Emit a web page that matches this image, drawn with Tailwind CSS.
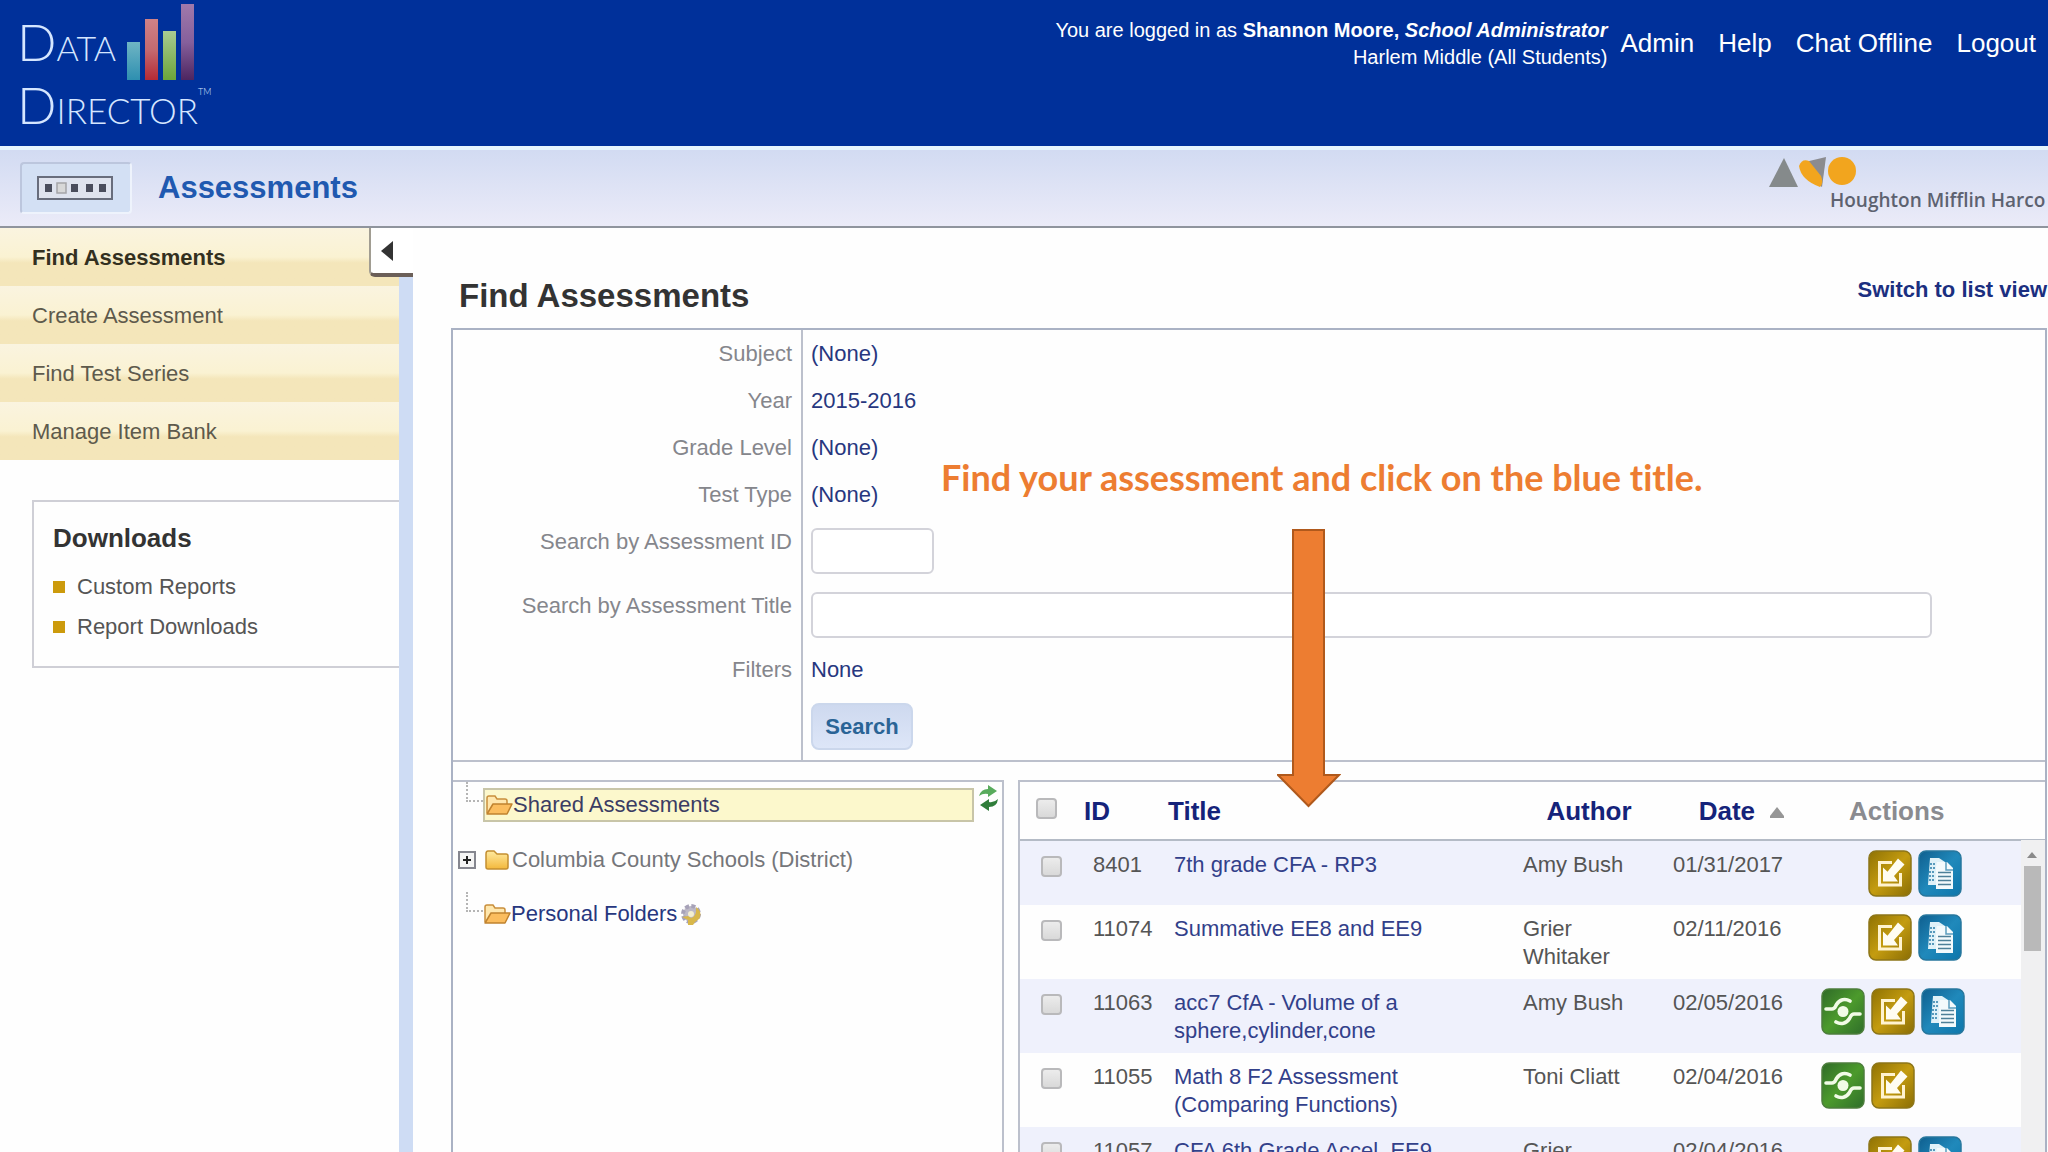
<!DOCTYPE html>
<html lang="en">
<head>
  <meta charset="UTF-8">
  <meta name="viewport" content="width=device-width, initial-scale=1.0">
  <title>DataDirector | Find Assessments</title>
  <script src="https://cdn.jsdelivr.net/npm/@tailwindcss/browser@4"></script>
</head>
<body class="h-screen flex flex-col overflow-hidden bg-[#fefefe] font-['Liberation_Sans',Arial,sans-serif] text-[22px] leading-7 text-[#555]">

  <!-- Shared icons -->
  <svg class="absolute size-0" aria-hidden="true">
    <defs>
      <linearGradient id="gold" x1="0" y1="0" x2="1" y2="1">
        <stop offset="0" stop-color="#8f7204"/><stop offset=".5" stop-color="#c49c10"/><stop offset="1" stop-color="#8a6d05"/>
      </linearGradient>
      <linearGradient id="blue" x1="0" y1="0" x2="1" y2="1">
        <stop offset="0" stop-color="#0f5f8f"/><stop offset=".5" stop-color="#2089bb"/><stop offset="1" stop-color="#0d76ab"/>
      </linearGradient>
      <linearGradient id="green" x1="0" y1="0" x2="1" y2="1">
        <stop offset="0" stop-color="#2f6b28"/><stop offset=".5" stop-color="#4c9a2c"/><stop offset="1" stop-color="#2f6e2a"/>
      </linearGradient>
      <linearGradient id="folder" x1="0" y1="0" x2="0" y2="1">
        <stop offset="0" stop-color="#ffeaa0"/><stop offset="1" stop-color="#f3b83c"/>
      </linearGradient>
      <symbol id="edit" viewBox="0 0 44 47">
        <rect x="1" y="1" width="42" height="45" rx="7" fill="url(#gold)" stroke="#8d7619" stroke-width="1.5"/>
        <path d="M24 12.500H11.500v22.500H32.500V23" fill="none" stroke="#fff3cf" stroke-width="3"/>
        <path d="M15 31.500V17.500l4.500 4.200L30 8.500l6.500 6L26 26l4 5.500z" fill="#fffdf2"/>
      </symbol>
      <symbol id="copy" viewBox="0 0 44 47">
        <rect x="1" y="1" width="42" height="45" rx="7" fill="url(#blue)" stroke="#27779d" stroke-width="1.500"/>
        <path d="M12 8h9l6 4v23H10z" fill="#dff1f8"/>
        <path d="M12 14h5M12 18h5M11 22h5M11 26h5M11 30h5" stroke="#2b7ea8" stroke-width="1.500" stroke-dasharray="2 1"/>
        <path d="M19 12h10l6 6v21H18V17z" fill="#f3fafc"/>
        <path d="M28 12v8h7" fill="none" stroke="#5b9dbd" stroke-width="1.500"/>
        <path d="M20 22.500h13M20 26.500h13M20 30.500h13M20 34.500h13" stroke="#4d8098" stroke-width="1.600"/>
      </symbol>
      <symbol id="share" viewBox="0 0 44 47">
        <rect x="1" y="1" width="42" height="45" rx="7" fill="url(#green)" stroke="#4d7e3c" stroke-width="1.500"/>
        <circle cx="22" cy="23.500" r="5.500" fill="#f1fbe6"/>
        <path d="M5 21h6c3 0 3-2 4.500-4.500C18.500 11.500 24 10 29 13M39 26h-6c-3 0-3 2-4.500 4.500C25.500 35.500 20 37 15 34" fill="none" stroke="#f1fbe6" stroke-width="3.600" stroke-linecap="round"/>
      </symbol>
      <symbol id="open" viewBox="0 0 28 22">
        <path d="M2 19V4q0-2 2-2h6l2 3h8q2 0 2 2v3" fill="#ffe7ad" stroke="#c98f3c" stroke-width="1.500"/>
        <path d="M2 20L8 10h19l-5 10z" fill="#fbbd5e" stroke="#c0832f" stroke-width="1.500" stroke-linejoin="round"/>
      </symbol>
    </defs>
  </svg>

  <!-- Header -->
  <header class="shrink-0 h-[146px] flex justify-between bg-[#00309a] text-white">
    <a href="#" aria-label="Data Director" class="pl-[17px] pt-1 flex flex-col font-['Lato',sans-serif] font-light text-[#d5e6ff]">
      <span class="flex items-end gap-[11px] h-[78px]">
        <span class="text-[34px] leading-[68px]"><span class="text-[52px]">D</span>ATA</span>
        <svg class="w-[67px] h-[78px]" viewBox="0 0 67 78">
          <defs>
            <linearGradient id="b1" x1="0" y1="0" x2="0" y2="1"><stop offset="0" stop-color="#6fb5c4"/><stop offset="1" stop-color="#2e8fb0"/></linearGradient>
            <linearGradient id="b2" x1="0" y1="0" x2="0" y2="1"><stop offset="0" stop-color="#cf8287"/><stop offset=".5" stop-color="#c46a70"/><stop offset="1" stop-color="#b52a35"/></linearGradient>
            <linearGradient id="b3" x1="0" y1="0" x2="0" y2="1"><stop offset="0" stop-color="#a9cb92"/><stop offset="1" stop-color="#6ba53a"/></linearGradient>
            <linearGradient id="b4" x1="0" y1="0" x2="0" y2="1"><stop offset="0" stop-color="#9f79ab"/><stop offset=".5" stop-color="#86609c"/><stop offset="1" stop-color="#4d2560"/></linearGradient>
          </defs>
          <rect x="0" y="38" width="13" height="38" fill="url(#b1)"/>
          <rect x="18" y="15" width="13" height="61" fill="url(#b2)"/>
          <rect x="36" y="27" width="13" height="49" fill="url(#b3)"/>
          <rect x="54" y="0" width="13" height="76" fill="url(#b4)"/>
        </svg>
      </span>
      <span class="flex items-start text-[35px] leading-[44px]"><span><span class="text-[52px]">D</span>IRECTOR</span><span class="text-[9px] leading-5">TM</span></span>
    </a>
    <div class="flex items-start pt-[17px] pr-3 gap-[13px]">
      <p class="text-right text-[20px] leading-[27px]">You are logged in as <b>Shannon Moore, <i>School Administrator</i></b><br>Harlem Middle (All Students)</p>
      <nav class="flex gap-6 pt-3 text-[26px] leading-7">
        <a href="#">Admin</a>
        <a href="#">Help</a>
        <a href="#">Chat Offline</a>
        <a href="#">Logout</a>
      </nav>
    </div>
  </header>

  <!-- Title strip -->
  <div class="shrink-0 h-[82px] flex justify-between border-t-4 border-t-[#e6f5fd] border-b-2 border-b-[#8f949d] bg-linear-to-b from-[#d2dbf2] to-[#ebebf8]">
    <div class="flex items-center pl-5 gap-[26px]">
      <button aria-label="Modules" class="w-[112px] h-[52px] flex items-center pl-[14px] border-2 border-t-[#bcc6dd] border-l-[#bcc6dd] border-r-[#eef3fc] border-b-[#eef3fc] bg-[#d3e0f4] rounded">
        <svg class="w-[78px] h-[26px]" viewBox="0 0 78 26">
          <rect x="2" y="2" width="74" height="22" fill="#dfe3ee" stroke="#686d7c" stroke-width="2"/>
          <path d="M9 9h7v8H9zM35 9h7v8h-7zM50 9h7v8h-7zM63 9h7v8h-7z" fill="#4a4d5c"/>
          <rect x="21" y="8" width="9" height="10" fill="#d8d8d8" stroke="#a5a5a8" stroke-width="1.500"/>
        </svg>
      </button>
      <h2 class="text-[31px] leading-9 font-bold text-[#2059b0]">Assessments</h2>
    </div>
    <div class="w-[279px] pt-[6px]">
      <svg class="w-[88px] h-[32px]" viewBox="0 0 88 32">
        <path d="M15 2L29 31H0z" fill="#858a8b"/>
        <path d="M36 6L57 1L53 31Q44 26 34 12z" fill="#8b8b8f"/>
        <path d="M30 10Q33 2 40 5L52 20Q55 27 51 31Q32 24 30 10z" fill="#f2a51e"/>
        <circle cx="73" cy="15" r="14" fill="#f2a51e"/>
      </svg>
      <p class="pl-[61px] text-[19px] leading-6 font-semibold whitespace-nowrap text-[#5d6270] font-['Open_Sans',sans-serif]">Houghton Mifflin Harco</p>
    </div>
  </div>

  <div class="flex-1 min-h-0 flex">
    <!-- Sidebar -->
    <aside class="relative shrink-0 w-[413px] border-r-[14px] border-[#cedcf4]">
      <nav class="flex flex-col text-[#5e5a4c]">
        <a href="#" class="h-[58px] pl-8 leading-[60px] font-bold text-[#33301f] bg-linear-to-b from-[#faf4e0] via-[#faf2d2] via-50% to-[#f4e6ba] to-60%">Find Assessments</a>
        <a href="#" class="h-[58px] pl-8 leading-[60px] bg-linear-to-b from-[#faf4e0] via-[#faf2d2] via-50% to-[#f4e6ba] to-60%">Create Assessment</a>
        <a href="#" class="h-[58px] pl-8 leading-[60px] bg-linear-to-b from-[#faf4e0] via-[#faf2d2] via-50% to-[#f4e6ba] to-60%">Find Test Series</a>
        <a href="#" class="h-[58px] pl-8 leading-[60px] bg-linear-to-b from-[#faf4e0] via-[#faf2d2] via-50% to-[#f4e6ba] to-60%">Manage Item Bank</a>
      </nav>
      <section class="mt-10 ml-8 h-[168px] pl-[19px] pt-5 border-2 border-r-0 border-[#cfcfd6]">
        <h3 class="text-[26px] leading-8 font-bold text-[#333]">Downloads</h3>
        <ul class="pt-[13px] leading-10">
          <li class="flex items-center gap-3"><span class="size-3 bg-[#cc9a0c]"></span><a href="#">Custom Reports</a></li>
          <li class="flex items-center gap-3"><span class="size-3 bg-[#cc9a0c]"></span><a href="#">Report Downloads</a></li>
        </ul>
      </section>
      <!-- Collapse tab, sits over the menu -->
      <button aria-label="Collapse menu" class="absolute top-0 -right-[14px] w-11 h-[49px] pl-[10px] bg-white border-l-2 border-l-[#a19d92] border-b-4 border-b-[#6b5f58] rounded-bl-md">
        <svg class="w-3 h-5" viewBox="0 0 12 20"><path d="M12 0v20L0 10z" fill="#333"/></svg>
      </button>
    </aside>

    <main class="flex-1 min-w-0 flex flex-col pl-[38px] pr-px">
      <div class="shrink-0 h-[100px] pl-2 pt-12 flex justify-between items-start">
        <h1 class="text-[33px] leading-10 font-bold text-[#333]">Find Assessments</h1>
        <a href="#" class="font-bold text-[#1b2f80]">Switch to list view</a>
      </div>

      <div class="relative flex-1 min-h-0 flex flex-col border-2 border-b-0 border-[#aab2c4]">
        <!-- Search form -->
        <form class="shrink-0 border-b-2 border-[#bcc0cc] grid grid-cols-[350px_1fr] leading-[47px] text-[#27377f]">
          <span class="h-[47px] pr-[9px] border-r-2 border-[#bcc0cc] text-right text-[#85868c]">Subject</span>
          <a href="#" class="pl-2">(None)</a>
          <span class="h-[47px] pr-[9px] border-r-2 border-[#bcc0cc] text-right text-[#85868c]">Year</span>
          <a href="#" class="pl-2">2015-2016</a>
          <span class="h-[47px] pr-[9px] border-r-2 border-[#bcc0cc] text-right text-[#85868c]">Grade Level</span>
          <a href="#" class="pl-2">(None)</a>
          <span class="h-[47px] pr-[9px] border-r-2 border-[#bcc0cc] text-right text-[#85868c]">Test Type</span>
          <a href="#" class="pl-2">(None)</a>
          <label for="assessmentId" class="h-16 pr-[9px] border-r-2 border-[#bcc0cc] text-right text-[#85868c]">Search by Assessment ID</label>
          <div class="flex pl-2 pt-[10px]"><input id="assessmentId" type="text" class="w-[123px] h-[46px] px-2 border-2 border-[#d3d3da] rounded-md bg-white"></div>
          <label for="assessmentTitle" class="h-16 pr-[9px] border-r-2 border-[#bcc0cc] text-right text-[#85868c]">Search by Assessment Title</label>
          <div class="flex pl-2 pr-[113px] pt-[10px]"><input id="assessmentTitle" type="text" class="w-full h-[46px] px-2 border-2 border-[#d3d3da] rounded-md bg-white"></div>
          <span class="h-[47px] pr-[9px] border-r-2 border-[#bcc0cc] text-right text-[#85868c]">Filters</span>
          <a href="#" class="pl-2">None</a>
          <span class="h-[67px] border-r-2 border-[#bcc0cc]"></span>
          <div class="flex pl-2 pt-[10px]"><button type="button" class="w-[102px] h-[47px] rounded-lg border-2 border-[#cbd7ec] bg-linear-to-b from-[#ced9ef] to-[#dde6f8] leading-7 font-bold text-[#2a6496]">Search</button></div>
        </form>

        <div class="flex-1 min-h-0 flex gap-[14px] pt-[18px]">
          <!-- Folder tree -->
          <div class="shrink-0 w-[551px] border-t-2 border-r-2 border-[#bcc0cc] pl-[13px]">
            <div class="flex items-start">
              <span class="w-[17px] h-5 border-l-2 border-b-2 border-dotted border-[#b5b5b5]"></span>
              <a href="#" class="flex-1 mt-[6px] h-[34px] flex items-center border-2 border-[#c8c5a8] bg-[#fcf8cc] text-[#3b3d63]"><svg class="w-7 h-[22px]"><use href="#open"/></svg>Shared Assessments</a>
              <button aria-label="Refresh" class="w-7 h-[30px] pl-1 pt-px">
                <svg class="w-[21px] h-[26px]" viewBox="0 0 21 26">
                  <path d="M1 11Q3 4 10 4V0l9 6-9 6V9Q5 8 1 11z" fill="#58ab5c"/>
                  <path d="M20 14q-1 8-9 8v4l-9-6 9-6v3q5 1 9-3z" fill="#2f7d3a"/>
                </svg>
              </button>
            </div>
            <div class="flex items-center pt-4 text-[#75767a]">
              <button aria-label="Expand" class="-ml-2 size-[18px] mr-2">
                <svg class="size-[18px]" viewBox="0 0 18 18"><rect x="1" y="1" width="16" height="16" fill="#f4f4f4" stroke="#85868f" stroke-width="2"/><path d="M9 5v8M5 9h8" stroke="#222" stroke-width="2"/></svg>
              </button>
              <svg class="w-7 h-[22px]" viewBox="0 0 28 22"><path d="M2 5q0-3 2-3h6l3 3h9q2 0 2 2v11q0 2-2 2H4q-2 0-2-2z" fill="url(#folder)" stroke="#c48f31" stroke-width="1.500"/></svg>
              <a href="#" class="h-[44px] leading-[44px]">Columbia County Schools (District)</a>
            </div>
            <div class="flex items-start pt-[10px]">
              <span class="w-[17px] h-5 border-l-2 border-b-2 border-dotted border-[#b5b5b5]"></span>
              <a href="#" class="pt-2 flex items-center text-[#27377f]"><svg class="w-7 h-[22px]"><use href="#open"/></svg>Personal Folders</a>
              <button aria-label="Folder settings" class="pt-[11px] pl-[2px]">
                <svg class="w-[23px] h-[23px]" viewBox="0 0 23 23">
                  <circle cx="12" cy="11" r="8" fill="#bdb9c6" stroke="#a7a2b8" stroke-width="4" stroke-dasharray="4 2.300"/>
                  <path d="M17 4q7 5 3 12l-4 3-2 3H9v-5l-6-3 6-1 3 2q6-2 5-11z" fill="#d8b74a"/>
                  <circle cx="12" cy="11" r="3" fill="#f4efcf"/>
                </svg>
              </button>
            </div>
          </div>

          <!-- Results -->
          <div class="relative flex-1 min-w-0 overflow-hidden border-t-2 border-l-2 border-[#bcc0cc]">
            <table class="w-full table-fixed">
              <colgroup>
                <col class="w-[64px]"><col class="w-[84px]"><col><col class="w-[150px]"><col class="w-[155px]"><col class="w-[202px]"><col class="w-6">
              </colgroup>
              <thead>
                <tr class="h-[58px] border-b-2 border-[#b4bbc6] text-[26px] leading-8 text-left text-[#15237a]">
                  <th class="pl-4"><input type="checkbox" aria-label="Select all" class="block -mt-1 size-[21px] appearance-none border-2 border-[#b9b9bb] rounded bg-linear-to-b from-[#ececec] to-[#d9d9d9]"></th>
                  <th><a href="#">ID</a></th>
                  <th><a href="#">Title</a></th>
                  <th class="text-center"><a href="#">Author</a></th>
                  <th class="text-center"><a href="#">Date <svg class="inline w-[14px] h-[11px] ml-2" viewBox="0 0 14 11"><path d="M7 0l7 9v2H0V9z" fill="#969696"/></svg></a></th>
                  <th class="pl-[30px] text-[#8a8b90]">Actions</th>
                  <th></th>
                </tr>
              </thead>
              <tbody id="rows"></tbody>
            </table>
            <!-- Scroll bar -->
            <div class="absolute right-0 top-[58px] bottom-0 w-6 pl-[3px] pt-3 bg-[#f0f0f1]">
              <svg class="block w-[17px] h-[7px]" viewBox="0 0 17 7"><path d="M8 0l5 6H3z" fill="#8a8a8a"/></svg>
              <div class="mt-[7px] w-[17px] h-[85px] bg-[#b9b9b9]"></div>
            </div>
          </div>
        </div>

        <!-- Callout -->
        <p class="absolute left-[488px] top-[127px] text-[36px] leading-10 font-bold whitespace-nowrap text-[#ed7d31] font-['Lato',sans-serif] [font-variant-ligatures:none]">Find your assessment and click on the blue title.</p>
        <svg class="absolute left-[824px] top-[199px] w-16 h-[279px]" viewBox="0 0 64 279"><path d="M16 1h31v245h15L31.500 277 1 246h15z" fill="#ed7d31" stroke="#b0591c" stroke-width="2"/></svg>
      </div>
    </main>
  </div>

  <script>
    const assessments = [
      { id: 8401, title: "7th grade CFA - RP3", author: "Amy Bush", date: "01/31/2017", actions: ["", "edit", "copy"] },
      { id: 11074, title: "Summative EE8 and EE9", author: "Grier Whitaker", date: "02/11/2016", actions: ["", "edit", "copy"] },
      { id: 11063, title: "acc7 CfA - Volume of a sphere,cylinder,cone", author: "Amy Bush", date: "02/05/2016", actions: ["share", "edit", "copy"] },
      { id: 11055, title: "Math 8 F2 Assessment (Comparing Functions)", author: "Toni Cliatt", date: "02/04/2016", actions: ["share", "edit"] },
      { id: 11057, title: "CFA 6th Grade Accel. EE9", author: "Grier Whitaker", date: "02/04/2016", actions: ["", "edit", "copy"] }
    ];

    // an empty action keeps its slot so the icons line up
    function actionButton(name) {
      if (!name) return '<span class="w-[41px]"></span>';
      return `<button aria-label="${name}"><svg class="block w-11 h-[47px]"><use href="#${name}"/></svg></button>`;
    }

    document.getElementById("rows").innerHTML = assessments.map(a => `
      <tr class="align-top odd:bg-[#eff1fc] even:bg-[#fefefe]">
        <td class="pl-[21px] pt-[15px]"><input type="checkbox" aria-label="Select ${a.id}" class="block size-[21px] appearance-none border-2 border-[#b9b9bb] rounded bg-linear-to-b from-[#ececec] to-[#d9d9d9]"></td>
        <td class="pl-[9px] pt-[10px] pb-2">${a.id}</td>
        <td class="pl-[6px] pr-[70px] pt-[10px] pb-2"><a href="#" class="text-[#32408a]">${a.title}</a></td>
        <td class="pl-[9px] pr-6 pt-[10px] pb-2">${a.author}</td>
        <td class="pl-[9px] pt-[10px] pb-2">${a.date}</td>
        <td class="pl-[2px] pt-[9px] pb-2"><div class="flex gap-[6px]">${a.actions.map(actionButton).join("")}</div></td>
        <td></td>
      </tr>`).join("");
  </script>
</body>
</html>
